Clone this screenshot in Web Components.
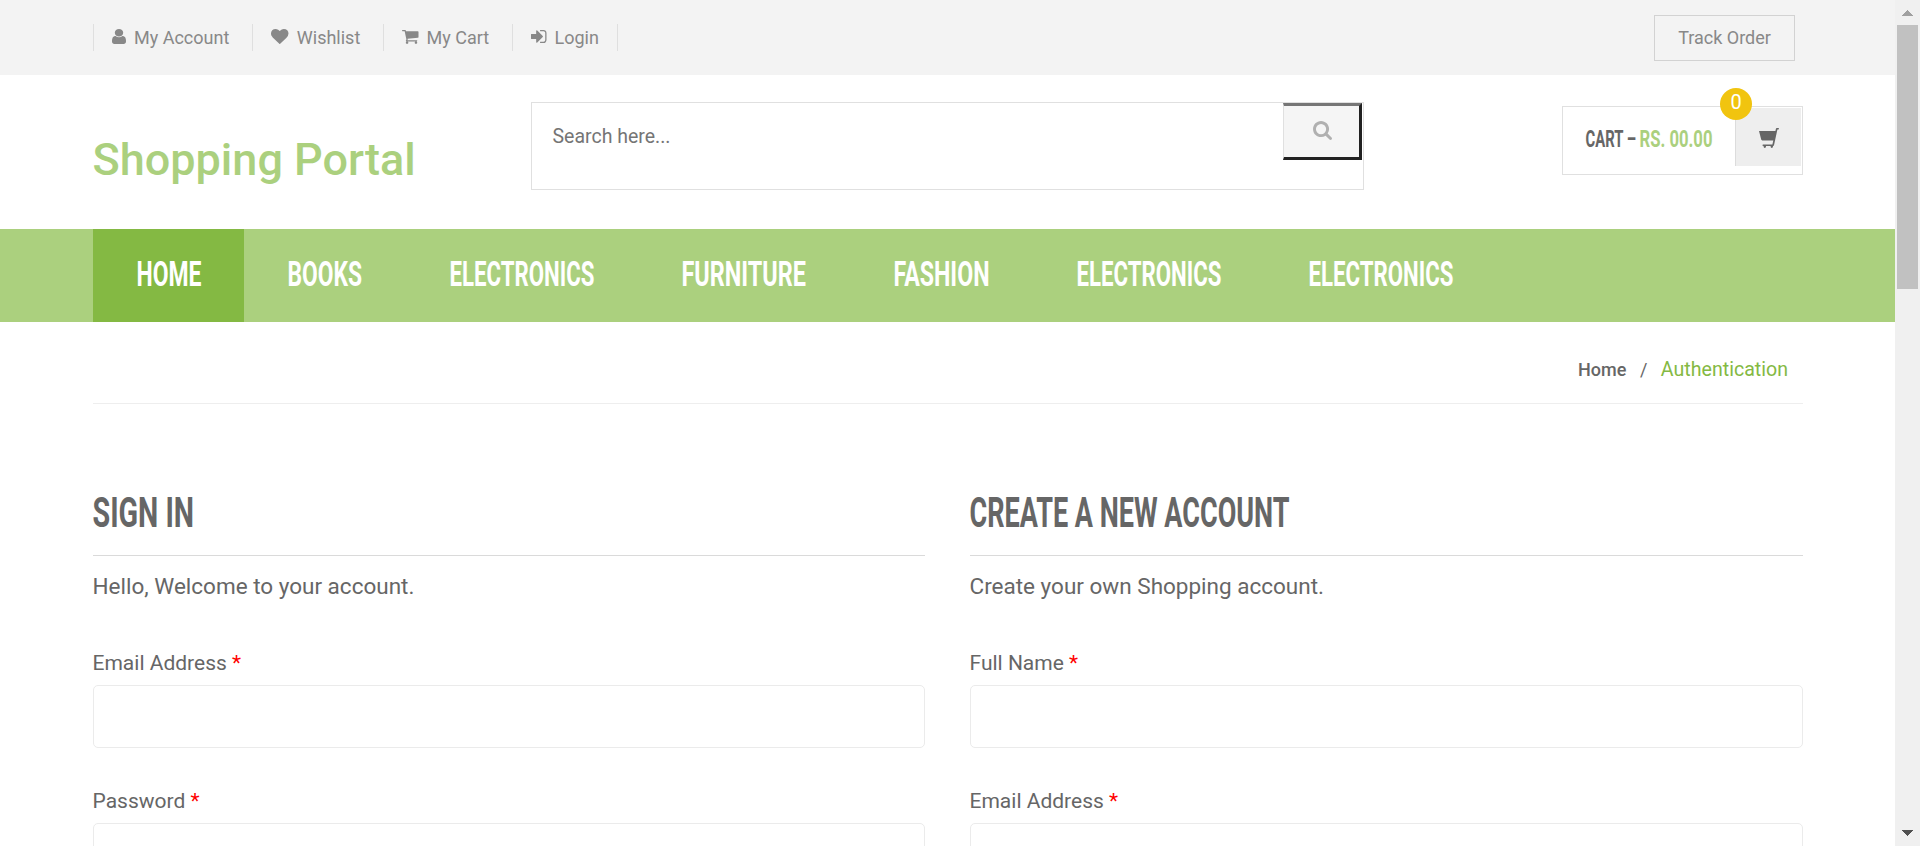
<!DOCTYPE html>
<html lang="en">
<head>
<meta charset="utf-8">
<title>Shopping Portal | Signin | Signup</title>
<style>
html,body{margin:0;height:100%;overflow:hidden;background:#fff}
body{font-family:Roboto,"Liberation Sans",sans-serif;color:#666}
</style>
</head>
<body>
<portal-page></portal-page>
<script>
const define = (name, html, setup) => customElements.define(name, class extends HTMLElement {
  connectedCallback() {
    if (this.shadowRoot) return;
    const t = document.createElement('template');
    t.innerHTML = typeof html === 'function' ? html(this) : html;
    this.attachShadow({mode:'open'}).append(t.content.cloneNode(true));
    if (setup) setup(this);
  }
});

const icons = {
  user:['256 128 1280 1536','M1536 1399q0 109-62.5 187t-150.5 78h-854q-88 0-150.5-78t-62.5-187q0-85 8.5-160.5t31.5-152 58.5-131 94-89 134.5-34.5q131 128 313 128t313-128q76 0 134.5 34.5t94 89 58.5 131 31.5 152 8.5 160.5zm-256-887q0 159-112.5 271.5t-271.5 112.5-271.5-112.5-112.5-271.5 112.5-271.5 271.5-112.5 271.5 112.5 112.5 271.5z'],
  heart:['0 128 1792 1536','M896 1664q-26 0-44-18l-624-602q-10-8-27.5-26t-55.5-65.5-68-97.5-53.5-121-23.5-138q0-220 127-344t351-124q62 0 126.5 21.5t120 58 95.5 68.5 76 68q36-36 76-68t95.5-68.5 120-58 126.5-21.5q224 0 351 124t127 344q0 221-229 450l-623 600q-18 18-44 18z'],
  cart:['64 256 1664 1408','M704 1536q0 52-38 90t-90 38-90-38-38-90 38-90 90-38 90 38 38 90zm896 0q0 52-38 90t-90 38-90-38-38-90 38-90 90-38 90 38 38 90zm128-1088v512q0 24-16.5 42.5t-40.5 21.5l-1044 122q13 60 13 70 0 16-24 64h920q26 0 45 19t19 45-19 45-45 19h-1024q-26 0-45-19t-19-45q0-11 8-31.5t16-36 21.5-40 15.5-29.5l-177-823h-204q-26 0-45-19t-19-45 19-45 45-19h256q16 0 28.5 6.5t19.5 15.5 13 24.5 8 26 5.5 29.5 4.5 26h1201q26 0 45 19t19 45z'],
  login:['128 256 1536 1280','M1312 896q0 26-19 45l-544 544q-19 19-45 19t-45-19-19-45v-288h-448q-26 0-45-19t-19-45v-384q0-26 19-45t45-19h448v-288q0-26 19-45t45-19 45 19l544 544q19 19 19 45zm352-352v704q0 119-84.5 203.5t-203.5 84.5h-320q-13 0-22.5-9.5t-9.5-22.5q0-4-1-20t-.5-26.5 3-23.5 10-19.5 20.5-6.5h320q66 0 113-47t47-113v-704q0-66-47-113t-113-47h-312l-11.5-1-11.5-3-8-5.5-7-9-2-13.5q0-4-1-20t-.5-26.5 3-23.5 10-19.5 20.5-6.5h320q119 0 203.5 84.5t84.5 203.5z'],
  search:['64 128 1664 1664','M1216 832q0-185-131.5-316.5t-316.5-131.5-316.5 131.5-131.5 316.5 131.5 316.5 316.5 131.5 316.5-131.5 131.5-316.5zm512 832q0 52-38 90t-90 38q-54 0-90-38l-343-342q-179 124-399 124-143 0-273.5-55.5t-225-150-150-225-55.5-273.5 55.5-273.5 150-225 225-150 273.5-55.5 273.5 55.5 225 150 150 225 55.5 273.5q0 220-124 399l343 343q37 37 37 90z'],
  basket:['0 0 20 20','M0 3H16.4L17 .6Q17.2 0 17.8 0H19.3Q20 0 20 .8T19.3 1.6H18.4L15 17.2Q14.8 18 14 18V18.6Q14 20 12.8 20T11.6 18.6V18H7V18.6Q7 20 5.8 20T4.6 18.6V18Q3.4 18 3.4 17.2T4.2 16.4H13.4L14.3 12.4H3.2Q2.4 12.4 2.2 11.6Z']
};
define('ui-icon', el => { const [box,d] = icons[el.getAttribute('name')];
  return `<style>:host{display:block;flex:none}svg{display:block}</style>
  <svg width="${el.getAttribute('w')}" height="${el.getAttribute('h')}" viewBox="${box}" preserveAspectRatio="none" fill="currentColor"><path d="${d}"/></svg>`; });

/* Condensed display lettering: "w" is the set width, "cap" the capital height */
define('display-text', el => { const cap=+el.getAttribute('cap');
  return `<style>:host{display:block;flex:none;width:${el.getAttribute('w')}px;height:${cap}px}
  span{display:inline-block;vertical-align:top;white-space:nowrap;font:700 ${cap/.711}px/${cap*1.04}px Roboto,"Noto Sans",sans-serif;transform-origin:0 0}</style>
  <span>${el.getAttribute('text')}</span>`; },
  el => { const s=el.shadowRoot.querySelector('span'), w=+el.getAttribute('w')+2;
    s.style.transform=`translateX(-.5px) scaleX(${w/s.getBoundingClientRect().width})`; });

define('top-link', el => `<style>:host{display:flex;box-sizing:border-box;height:27px;border-right:1px solid #dfdfdf;color:#888;font-size:18px;line-height:27px;width:${el.getAttribute('w')}px;padding-left:${el.getAttribute('pad')}px}
  ui-icon{margin-top:${el.getAttribute('top')}px;margin-right:${el.getAttribute('gap')}px}span{white-space:nowrap}</style>
  <ui-icon name="${el.getAttribute('icon')}" w="${el.getAttribute('iw')}" h="${el.getAttribute('ih')}"></ui-icon><span><slot></slot></span>`);

define('top-bar', `<style>:host{display:flex;justify-content:space-between;height:75px;box-sizing:border-box;background:#f3f3f3;padding:0 100px 0 93px}
  nav{display:flex;margin-top:24px;height:27px;border-left:1px solid #dfdfdf}
  a{box-sizing:border-box;width:141px;height:46px;margin-top:15px;border:1px solid #d2d2d2;color:#888;font-size:18px;line-height:44px;text-align:center}</style>
  <nav>
  <top-link icon="user" w="159" pad="18" iw="14" ih="15" top="4.5" gap="8">My Account</top-link>
  <top-link icon="heart" w="131" pad="18" iw="17.5" ih="15" top="5" gap="8.3">Wishlist</top-link>
  <top-link icon="cart" w="129" pad="18" iw="16.5" ih="14" top="5.5" gap="8">My Cart</top-link>
  <top-link icon="login" w="105" pad="18" iw="15.5" ih="13" top="5.5" gap="8">Login</top-link>
  </nav><a>Track Order</a>`);

define('search-box', `<style>:host{display:flex;justify-content:space-between;box-sizing:border-box;width:833px;height:88px;border:1px solid #e0e0e0;padding:0 1px 0 20.5px;font-size:19.5px;color:#757575}
  span{line-height:68px}
  button{display:flex;justify-content:center;box-sizing:border-box;width:79px;height:57px;margin:0;padding:15px 0 0 1px;background:#f5f5f5;color:#b0b0b0;border:3px solid;border-color:#767676 #212121 #212121 #e0e0e0;border-left-width:1px}</style>
  <span>Search here...</span><button aria-label="Search"><ui-icon name="search" w="19" h="19"></ui-icon></button>`);

define('cart-summary', `<style>:host{display:flex;position:relative;box-sizing:border-box;width:241px;height:69px;border:1px solid #e0e0e0;padding:1px 1px 0 23px}
  display-text{margin-top:23px}
  .sum{color:#abd07e;margin-left:5.5px}
  .cell{display:flex;justify-content:center;box-sizing:border-box;width:66px;height:58px;background:#eee;border-left:1px solid #dcdcdc;margin-left:auto;padding-top:20px}
  b{position:absolute;left:157px;top:-19px;width:32px;height:32px;border-radius:50%;background:#f1c40f;color:#fff;font:400 20px/28px Roboto,sans-serif;text-align:center}</style>
  <display-text text="CART –" w="48.5" cap="17"></display-text><display-text class="sum" text="RS. 00.00" w="71" cap="17"></display-text>
  <div class="cell"><ui-icon name="basket" w="20" h="20"></ui-icon></div><b>0</b>`);

define('site-header', `<style>:host{display:flex;height:154px;padding-left:93px}
  h1{margin:0;width:438px;font-weight:500;font-size:45px;line-height:60px;color:#abd07e;padding-top:55px;white-space:nowrap;text-indent:-.5px}
  search-box{margin-top:27px}cart-summary{margin:31px 0 0 198px}</style>
  <h1>Shopping Portal</h1><search-box></search-box><cart-summary></cart-summary>`);

define('nav-item', el => `<style>:host{display:block;box-sizing:border-box;width:${el.getAttribute('w')}px;height:93px;padding:32px 0 0 44px;color:#fff}:host([active]){background:#84b943}</style>
  <display-text text="${el.getAttribute('text')}" w="${el.getAttribute('tw')}" cap="25"></display-text>`);
define('main-nav', `<style>:host{display:flex;height:93px;background:#abd07e;padding-left:93px}</style>
  <nav-item active text="HOME" w="151.3" tw="63"></nav-item>
  <nav-item text="BOOKS" w="162" tw="72.5"></nav-item>
  <nav-item text="ELECTRONICS" w="231.7" tw="143"></nav-item>
  <nav-item text="FURNITURE" w="212" tw="122.5"></nav-item>
  <nav-item text="FASHION" w="183.5" tw="94"></nav-item>
  <nav-item text="ELECTRONICS" w="232" tw="143"></nav-item>
  <nav-item text="ELECTRONICS" w="232" tw="143"></nav-item>`);

define('bread-crumb', `<style>:host{display:flex;justify-content:flex-end;align-items:baseline;box-sizing:border-box;height:82px;margin:0 92px 0 93px;padding:31px 15px 0 0;border-bottom:1px solid #eee;font-size:18px;line-height:34px}
  b{font-weight:500}i{font-style:normal;margin:0 13.5px}a{font-size:19.6px;color:#84b943}</style>
  <b>Home</b><i>/</i><a>Authentication</a>`);

define('form-field', `<style>:host{display:block;height:138px;font-size:21px;line-height:30px}i{font-style:normal;color:red}
  label{display:block;height:30px;text-indent:-.5px}
  div{box-sizing:border-box;height:63px;margin-top:7px;border:1px solid #ebebeb;border-radius:5px}</style>
  <label><slot></slot> <i>*</i></label><div></div>`);

define('auth-panel', el => `<style>:host{display:block;min-width:0}
  header{height:58px;border-bottom:1px solid #dadada}
  p{margin:0;font-size:22.5px;line-height:30px;height:30px;padding:15px 0 47px;text-indent:-.5px}</style>
  <header><display-text text="${el.getAttribute('title-text')}" w="${el.getAttribute('tw')}" cap="30"></display-text></header>
  <p>${el.getAttribute('intro')}</p><slot></slot>`);

define('auth-section', `<style>:host{display:grid;grid-template-columns:832px 833px;gap:45px;padding:93px 0 0 93px}</style>
  <auth-panel title-text="SIGN IN" tw="99.5" intro="Hello, Welcome to your account."><form-field>Email Address</form-field><form-field>Password</form-field></auth-panel>
  <auth-panel title-text="CREATE A NEW ACCOUNT" tw="318" intro="Create your own Shopping account."><form-field>Full Name</form-field><form-field>Email Address</form-field></auth-panel>`);

define('scroll-track', `<style>:host{display:flex;flex-direction:column;align-items:center;width:25px;background:#f0f0f0}
  svg{display:block}.up{margin:10px 0 9px}.thumb{width:21px;height:264px;background:#c1c1c1}.down{margin:auto 0 10px}</style>
  <svg class="up" width="11" height="6" fill="#a0a0a0" shape-rendering="crispEdges"><path d="M5.5 0L11 6H0z"/></svg><div class="thumb"></div>
  <svg class="down" width="11" height="6" fill="#505050" shape-rendering="crispEdges"><path d="M0 0H11L5.5 6z"/></svg>`);

define('portal-page', `<style>:host{display:grid;grid-template-columns:1895px 25px;height:846px;overflow:hidden}main{height:846px;overflow:hidden}</style>
  <main><top-bar></top-bar><site-header></site-header><main-nav></main-nav><bread-crumb></bread-crumb><auth-section></auth-section></main><scroll-track></scroll-track>`);
</script>
</body>
</html>
